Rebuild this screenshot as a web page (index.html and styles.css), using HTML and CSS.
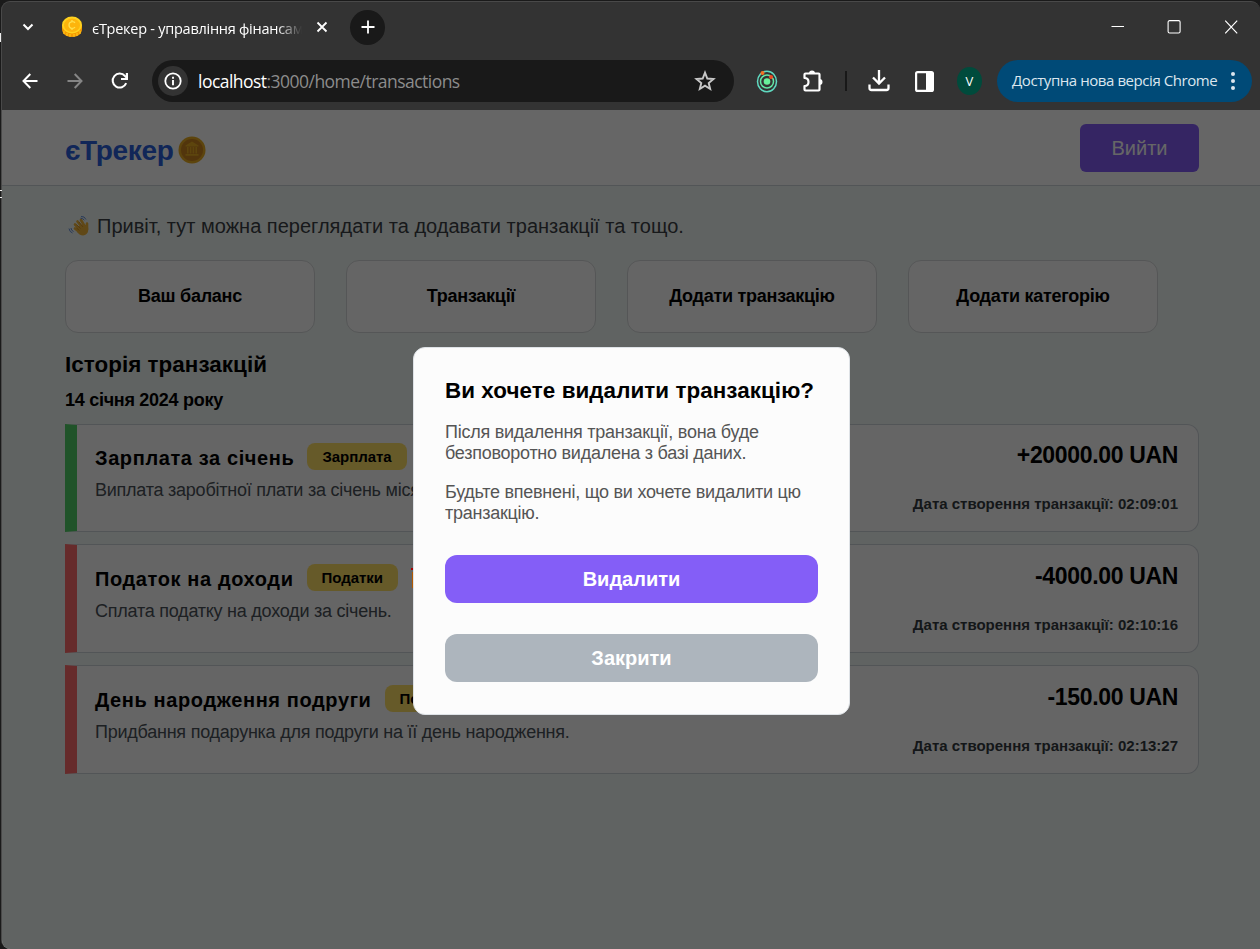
FILE: index.html
```html
<!DOCTYPE html>
<html lang="uk">
<head>
<meta charset="utf-8">
<title>єТрекер - управління фінансами</title>
<link rel="stylesheet" href="styles.css">
</head>
<body>
<i class="speck speck-a"></i><i class="speck speck-b"></i><i class="speck speck-c"></i>
<div class="window">
  <div class="tabs">
    <svg class="chevron" width="12" height="8" viewBox="0 0 12 8"><path d="M1.500 1.500 6 6l4.500-4.500" fill="none" stroke="#fff" stroke-width="2"/></svg>
    <svg class="favicon" width="22" height="22" viewBox="0 0 22 22"><path d="M1 9v4c0 5 4.500 8 10 8s10-3 10-8V9z" fill="#f59a00"/><path d="M3 15v3M6 17v3M9 18v3M13 18v3M16 17v3M19 15v3" stroke="#ffc61a" stroke-width="1.200"/><ellipse cx="11" cy="9" rx="10" ry="8.500" fill="#ffd21f"/><ellipse cx="11" cy="9.300" rx="8" ry="6.700" fill="#fdb50c"/><path d="M14 6.800C12.500 5 8 5.200 8 9s4.500 4.200 6 2.200M11 4v1.500m0 7V14" fill="none" stroke="#ffdf4d" stroke-width="1.300"/></svg>
    <span class="tab-title">єТрекер - управління фінансам</span>
    <svg class="tab-close" width="12" height="12" viewBox="0 0 12 12"><path d="m1.500 1.500 9 9m0-9-9 9" stroke="#fff" stroke-width="1.800"/></svg>
    <span class="new-tab"><svg width="14" height="14" viewBox="0 0 14 14"><path d="M7 .5v13M.5 7h13" stroke="#fff" stroke-width="1.800"/></svg></span>
    <div class="controls">
      <svg width="14" height="14" viewBox="0 0 14 14"><path d="M1.500 6.500h13" stroke="#fff"/></svg>
      <svg width="14" height="14" viewBox="0 0 14 14"><rect x="1.100" y=".6" width="12" height="12.400" rx="1.500" fill="none" stroke="#fff" stroke-width="1.100"/></svg>
      <svg width="14" height="14" viewBox="0 0 14 14"><path d="m1.200.700 12 12.600m0-12.600-12 12.600" stroke="#fff" stroke-width="1.200"/></svg>
    </div>
  </div>
  <div class="toolbar">
    <svg class="back" width="16" height="16" viewBox="0 0 16 16"><path d="M15.500 8H2m6.300-7L1.500 8l6.800 7" fill="none" stroke="#fff" stroke-width="2"/></svg>
    <svg class="forward" width="16" height="16" viewBox="0 0 16 16"><path d="M.5 8H14M7.700 1l6.800 7-6.800 7" fill="none" stroke="#858585" stroke-width="2"/></svg>
    <svg class="reload" width="18" height="18" viewBox="0 0 18 18"><path d="M15.200 11.200A7 7 0 1 1 14 4l2 2" fill="none" stroke="#fff" stroke-width="2"/><path d="M17 1v7h-7l0-2h4.800V1z" fill="#fff"/></svg>
    <div class="omnibox">
      <span class="info"><svg width="18" height="18" viewBox="0 0 18 18"><circle cx="9" cy="9" r="7.700" fill="none" stroke="#fff" stroke-width="1.800"/><path d="M9 8v5.300M9 4.700v2" stroke="#fff" stroke-width="1.900"/></svg></span>
      <span class="url"><b>localhost</b>:3000/home/transactions</span>
      <svg width="22" height="22" viewBox="0 0 22 22"><path d="m11 2.700 2.300 5.800 6.200.5-4.800 4 1.500 6L11 15.700 5.800 19l1.500-6-4.800-4 6.200-.5z" fill="none" stroke="#c7c7c7" stroke-width="1.900"/></svg>
    </div>
    <svg class="orbit" width="22" height="24" viewBox="0 0 22 24"><g fill="none" stroke="#63e6a4" stroke-width="1.500"><ellipse cx="11" cy="12.500" rx="9.500" ry="10.300" stroke="#5fd9c0"/><circle cx="11" cy="12.500" r="6.500"/></g><circle cx="11" cy="12.500" r="3.300" fill="#69f09a"/><circle cx="6.500" cy="4" r="2" fill="#f37021"/><circle cx="15" cy="8" r="2" fill="#f04a23"/></svg>
    <svg class="puzzle" width="22" height="24" viewBox="0 0 22 24"><path d="M2.500 9V5.500q0-1 1-1h13q1 0 1 1v15q0 1-1 1h-13q-1 0-1-1V17q4 0 4-4t-4-4z" fill="none" stroke="#fff" stroke-width="2.200" stroke-linejoin="round"/><path d="M7 4.500a3 3 0 0 1 6 0zM17.500 10a3 3 0 0 1 0 6z" fill="#fff"/></svg>
    <i class="divider"></i>
    <svg class="download" width="22" height="22" viewBox="0 0 22 22"><path d="M11 0v12M5 7.500l6 6 6-6M1.500 14.500V18q0 2 2 2h15q2 0 2-2v-3.500" fill="none" stroke="#fff" stroke-width="2.300"/></svg>
    <svg class="panel" width="19" height="21" viewBox="0 0 19 21"><rect x="1.100" y="1.100" width="16.800" height="18.800" rx="1.500" fill="none" stroke="#fff" stroke-width="2.200"/><path d="M11 1h7v19h-7z" fill="#fff"/></svg>
    <span class="avatar">V</span>
    <div class="update"><span>Доступна нова версія Chrome</span><i></i></div>
  </div>
  <div class="page">
    <header class="header">
      <div class="logo"><span>єТрекер</span><svg width="28" height="28" viewBox="0 0 28 28"><circle cx="14" cy="14" r="13.500" fill="#e8ac22"/><circle cx="14" cy="14" r="11" fill="#cd8420"/><path d="m7.500 9.500 6.500-4 6.500 4v1h-13zM9 11h1.600v6.500H9zm2.800 0h1.600v6.500h-1.600zm2.800 0h1.600v6.500h-1.600zm2.800 0H19v6.500h-1.600zM7.500 18h13v1.700h-13z" fill="#e8ac22"/></svg></div>
      <button class="logout">Вийти</button>
    </header>
    <main class="content">
      <p class="greeting"><svg width="22" height="22" viewBox="0 0 22 22"><g fill="none" stroke="#f0b43a" stroke-width="2.600" stroke-linecap="round"><path d="m7 13.500 5 4M7 9.500l6 6M9.500 6.500l5.500 7M13 5l4 7M19 8.500v6"/></g><path d="M10 11.500 16 9l4 3q1 4.500-1.500 7t-7 .5L9 17z" fill="#f0b43a"/><path d="m8.500 9.500 4 4m-1.500-6.500 4 5M8.500 13l3 2.500" stroke="#c98220" stroke-width=".7"/><path d="M13 1.500q3.500-.5 5 3M12.500 3.200q2.500 0 3.800 2M1 13.500q.5 3.500 3.500 4.500M3 13q0 2.500 2.500 3.500" fill="none" stroke="#6690dd"/></svg><span>Привіт, тут можна переглядати та додавати транзакції та тощо.</span></p>
      <nav class="nav"><a>Ваш баланс</a><a>Транзакції</a><a>Додати транзакцію</a><a>Додати категорію</a></nav>
      <h2>Історія транзакцій</h2>
      <h3>14 січня 2024 року</h3>
      <section class="list">
        <article class="card income">
          <div class="info-col"><div class="title"><h4>Зарплата за січень</h4><span class="badge">Зарплата</span></div><p>Виплата заробітної плати за січень місяць.</p></div>
          <div class="sum-col"><strong>+20000.00 UAN</strong><small>Дата створення транзакції: 02:09:01</small></div>
        </article>
        <article class="card expense">
          <div class="info-col"><div class="title"><h4>Податок на доходи</h4><span class="badge">Податки</span><svg class="trash" width="18" height="22" viewBox="0 0 18 22"><path d="M0 1h18v2H0z" fill="#a80000"/><path d="M1 5h16v16H1z" fill="#b35900"/></svg></div><p>Сплата податку на доходи за січень.</p></div>
          <div class="sum-col"><strong>-4000.00 UAN</strong><small>Дата створення транзакції: 02:10:16</small></div>
        </article>
        <article class="card expense">
          <div class="info-col"><div class="title"><h4>День народження подруги</h4><span class="badge">Подарунки</span></div><p>Придбання подарунка для подруги на її день народження.</p></div>
          <div class="sum-col"><strong>-150.00 UAN</strong><small>Дата створення транзакції: 02:13:27</small></div>
        </article>
      </section>
    </main>
    <div class="overlay"></div>
    <div class="modal">
      <h2>Ви хочете видалити транзакцію?</h2>
      <p>Після видалення транзакції, вона буде безповоротно видалена з базі даних.</p>
      <p>Будьте впевнені, що ви хочете видалити цю транзакцію.</p>
      <button class="danger">Видалити</button>
      <button class="close">Закрити</button>
    </div>
  </div>
</div>
</body>
</html>
```
FILE: styles.css
```css
* { box-sizing: border-box; margin: 0; padding: 0; }
body { width: 1260px; height: 949px; overflow: hidden; background: #1a1a1a; font-family: "Liberation Sans", Arial, sans-serif; position: relative; }
svg { display: block; flex: none; }
button { border: 0; font-family: inherit; }

.speck { position: absolute; left: 0; width: 1px; background: #eee; }
.speck-a { top: 33px; height: 9px; }
.speck-b { top: 190px; height: 1px; width: 2px; }
.speck-c { top: 197px; height: 1px; width: 2px; }

.window { display: flex; flex-direction: column; height: 948px; margin: 1px 0 0 1px; border: solid #494949; border-width: 1px 0 0 1px; border-radius: 9px 9px 0 9px; overflow: hidden; background: #333; }

.tabs { display: flex; align-items: center; height: 50px; flex: none; padding-left: 20px; }
.favicon { margin-left: 27px; }
.tab-title { width: 210px; margin: 3px 0 0 9px; white-space: nowrap; color: #fff; font: 14.500px "Open Sans", sans-serif; letter-spacing: -.26px; -webkit-mask-image: linear-gradient(90deg, #000 88%, transparent); mask-image: linear-gradient(90deg, #000 88%, transparent); }
.tab-close { margin-left: 14px; }
.new-tab { display: flex; align-items: center; justify-content: center; width: 35px; height: 35px; margin-left: 22px; border-radius: 50%; background: #191919; }
.controls { display: flex; gap: 43px; margin-left: auto; padding-right: 22px; }

.toolbar { display: flex; align-items: center; height: 58px; flex: none; padding: 0 8px 0 20px; }
.forward { margin-left: 29px; }
.reload { margin-left: 28px; }
.omnibox { display: flex; align-items: center; width: 582px; height: 42px; margin-left: 23px; padding: 0 18px 0 6px; border-radius: 21px; background: #191919; }
.info { display: flex; align-items: center; justify-content: center; width: 30px; height: 30px; border-radius: 50%; background: #333; }
.url { flex: 1; margin: 0 0 1px 10px; color: #8c8c8c; font: 17.500px "Open Sans", sans-serif; letter-spacing: -.53px; }
.url b { color: #fff; font-weight: 400; }
.orbit { margin-left: 22px; }
.puzzle { margin-left: 24px; }
.divider { width: 2px; height: 20px; margin-left: 21px; background: #181818; }
.download { margin-left: 21px; }
.panel { margin-left: 25px; }
.avatar { width: 25px; height: 28px; margin-left: 23px; border-radius: 50%; background: #004b3c; color: #fff; font: 13px/28px "Open Sans", sans-serif; text-align: center; }
.update { display: flex; align-items: center; justify-content: space-between; width: 255px; height: 42px; margin-left: auto; padding: 0 17px 0 15px; border-radius: 21px; background: #004a77; color: #dce6ee; font: 15px "Open Sans", sans-serif; letter-spacing: -.43px; white-space: nowrap; }
.update span { padding-bottom: 2px; }
.update i { width: 4px; height: 4px; border-radius: 50%; background: #dce6ee; box-shadow: 0 -7px #dce6ee, 0 7px #dce6ee; }

.page { position: relative; flex: 1; background: #f1f8f5; }
.header { display: flex; align-items: center; justify-content: space-between; height: 76px; padding: 0 61px 0 63px; border-bottom: 1px solid #ced4da; background: #fff; }
.logo { display: flex; align-items: center; gap: 5px; padding-top: 5px; color: #2b5fdc; font-size: 28px; font-weight: 700; letter-spacing: -.35px; }
.logo span { padding-top: 2px; }
.logout { width: 119px; height: 48px; padding-top: 1px; border-radius: 6px; background: #845ef7; color: #fff; font-size: 20px; }
.content { padding: 28px 61px 0 63px; }
.greeting { display: flex; align-items: center; gap: 7px; padding-left: 3px; height: 24px; color: #3b4045; font-size: 20px; letter-spacing: .01px; }
.nav { display: flex; gap: 31px; margin-top: 22px; }
.nav a { display: flex; align-items: center; justify-content: center; width: 250px; height: 73px; padding-bottom: 1px; border: 1px solid #d5d8da; border-radius: 13px; background: #fcfcfc; font-size: 18px; font-weight: 700; letter-spacing: -.27px; }
.content h2 { height: 26px; margin-top: 19px; font-size: 22.400px; line-height: 26px; letter-spacing: .05px; }
.content h3 { height: 22px; margin-top: 11px; font-size: 18px; line-height: 22px; letter-spacing: -.28px; }
.list { display: flex; flex-direction: column; gap: 12.400px; margin-top: 13px; }
.card { display: flex; justify-content: space-between; height: 108px; padding: 18px 20px 0 18px; border: 1px solid #ced4da; border-left-width: 12px; border-radius: 0 12px 12px 0; background: #fcfcfc; }
.income { border-left-color: #51cf66; }
.expense { height: 108.400px; padding-top: 19px; border-left-color: #ff6b6b; }
.title { display: flex; align-items: center; gap: 13px; height: 27px; }
.title h4 { padding-top: 4px; font-size: 20px; letter-spacing: .61px; white-space: nowrap; }
.badge { height: 27px; padding: 0 15px; border-radius: 8px; background: #ffe066; font-size: 15px; font-weight: 700; line-height: 27px; letter-spacing: -.05px; }
.trash { position: relative; z-index: 2; }
.info-col p { margin-top: 9.500px; color: #495057; font-size: 18px; letter-spacing: -.24px; white-space: nowrap; }
.sum-col { display: flex; flex-direction: column; align-items: flex-end; }
.sum-col strong { margin-top: -2px; font-size: 23px; line-height: 28px; letter-spacing: -.34px; }
.sum-col small { margin-top: 26px; color: #343a40; font-size: 15px; font-weight: 700; }

.overlay { position: absolute; inset: 0; z-index: 1; background: rgba(0, 0, 0, .6); }
.modal { position: absolute; z-index: 3; left: 411px; top: 237px; display: flex; flex-direction: column; width: 437px; height: 368px; padding: 29px 31px 0; border: 1px solid #dee2e6; border-radius: 12px; background: #fcfcfc; }
.modal h2 { margin-bottom: 17px; font-size: 22.400px; line-height: 28px; letter-spacing: .07px; white-space: nowrap; }
.modal p { margin-bottom: 18px; color: #555; font-size: 18px; line-height: 21px; letter-spacing: -.26px; }
.modal button { height: 48px; border-radius: 12px; color: #fff; font-size: 20px; font-weight: 700; }
.danger { margin-top: 13px; background: #845ef7; }
.close { margin-top: 31px; background: #adb5bd; }
```
